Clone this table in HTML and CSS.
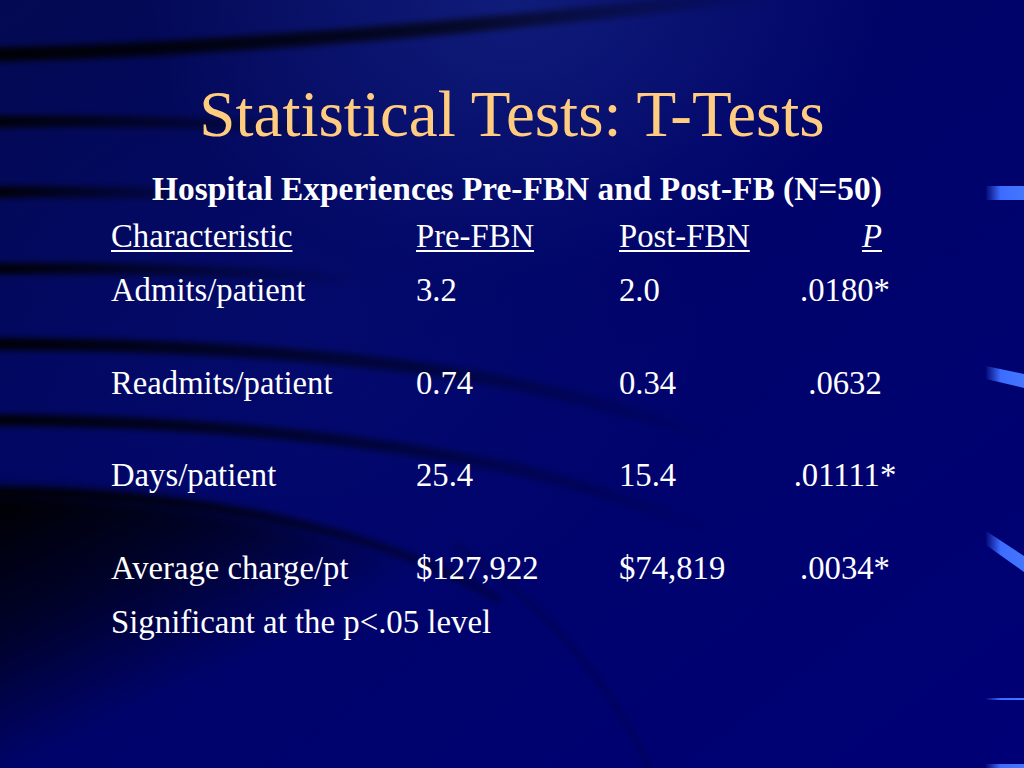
FILE: index.html
```html
<!DOCTYPE html>
<html lang="en">
<head>
<meta charset="utf-8">
<title>Statistical Tests: T-Tests</title>
<link rel="stylesheet" href="styles.css">
</head>
<body>
<div class="slide">
  <svg class="bg" viewBox="0 0 1024 768" preserveAspectRatio="none" aria-hidden="true">
    <defs>
      <linearGradient id="base" x1="0" y1="0" x2="1" y2="1">
        <stop offset="0" stop-color="#040a52"/>
        <stop offset="0.45" stop-color="#000468"/>
        <stop offset="1" stop-color="#000076"/>
      </linearGradient>
      <radialGradient id="glow" cx="0.5" cy="0.0" r="0.36">
        <stop offset="0" stop-color="#18288a" stop-opacity="0.65"/>
        <stop offset="1" stop-color="#18288a" stop-opacity="0"/>
      </radialGradient>
      <radialGradient id="glow2" cx="0.3" cy="0.45" r="0.4">
        <stop offset="0" stop-color="#0c1a80" stop-opacity="0.25"/>
        <stop offset="1" stop-color="#0c1a80" stop-opacity="0"/>
      </radialGradient>
      <linearGradient id="fadeL" gradientUnits="userSpaceOnUse" x1="0" y1="0" x2="780" y2="0">
        <stop offset="0" stop-color="#000" stop-opacity="0.95"/>
        <stop offset="0.6" stop-color="#000" stop-opacity="0.65"/>
        <stop offset="1" stop-color="#000" stop-opacity="0"/>
      </linearGradient>
      <linearGradient id="fadeXS" gradientUnits="userSpaceOnUse" x1="0" y1="0" x2="230" y2="0">
        <stop offset="0" stop-color="#000" stop-opacity="0.95"/>
        <stop offset="1" stop-color="#000" stop-opacity="0"/>
      </linearGradient>
      <linearGradient id="fadeS" gradientUnits="userSpaceOnUse" x1="0" y1="0" x2="360" y2="0">
        <stop offset="0" stop-color="#000" stop-opacity="0.95"/>
        <stop offset="1" stop-color="#000" stop-opacity="0"/>
      </linearGradient>
      <linearGradient id="fadeM" gradientUnits="userSpaceOnUse" x1="0" y1="0" x2="720" y2="0">
        <stop offset="0" stop-color="#000" stop-opacity="0.95"/>
        <stop offset="0.5" stop-color="#000" stop-opacity="0.5"/>
        <stop offset="1" stop-color="#000" stop-opacity="0"/>
      </linearGradient>
      <linearGradient id="dark" gradientUnits="userSpaceOnUse" x1="0" y1="490" x2="110" y2="720">
        <stop offset="0" stop-color="#000" stop-opacity="1"/>
        <stop offset="0.5" stop-color="#000" stop-opacity="0.6"/>
        <stop offset="1" stop-color="#000" stop-opacity="0"/>
      </linearGradient>
      <linearGradient id="accent" gradientUnits="userSpaceOnUse" x1="985" y1="0" x2="1024" y2="0">
        <stop offset="0" stop-color="#3c6cff" stop-opacity="0"/>
        <stop offset="0.4" stop-color="#3c6cff" stop-opacity="1"/>
        <stop offset="1" stop-color="#4576ff"/>
      </linearGradient>
      <filter id="blur" x="-10%" y="-50%" width="120%" height="200%">
        <feGaussianBlur stdDeviation="3"/>
      </filter>
      <filter id="blurBig" x="-20%" y="-20%" width="140%" height="140%">
        <feGaussianBlur stdDeviation="8"/>
      </filter>
    </defs>
    <rect width="1024" height="768" fill="url(#base)"/>
    <rect width="1024" height="768" fill="url(#glow)"/>
    <rect width="1024" height="768" fill="url(#glow2)"/>
    <path d="M-20 490 C 200 488 420 540 530 640 C 580 690 615 730 640 780 L -20 780 Z" fill="url(#dark)" filter="url(#blurBig)"/>
    <g fill="none" filter="url(#blur)">
      <path d="M-20 55 C 200 50 450 32 780 -8" stroke="url(#fadeL)" stroke-width="14"/>
      <path d="M-20 122 C 100 120 200 122 300 128" stroke="url(#fadeS)" stroke-width="11"/>
      <path d="M-20 192 C 60 191 140 192 230 195" stroke="url(#fadeXS)" stroke-width="11"/>
      <path d="M-20 269 C 120 267 260 271 380 282" stroke="url(#fadeS)" stroke-width="11"/>
      <path d="M-20 344 C 200 344 380 356 520 385 C 600 402 660 420 720 440" stroke="url(#fadeM)" stroke-width="12"/>
      <path d="M-20 420 C 200 420 380 440 520 470 C 600 490 660 510 720 535" stroke="url(#fadeM)" stroke-width="11"/>
      <path d="M-20 492 C 200 490 380 530 500 600" stroke="url(#fadeM)" stroke-width="8"/>
      <path d="M455 545 C 540 600 610 680 650 770" stroke="#000" stroke-opacity="0.18" stroke-width="6"/>
    </g>
    <rect x="986" y="186" width="38" height="14" fill="url(#accent)"/>
    <polygon points="986,366 1024,374 1024,388 986,379" fill="url(#accent)"/>
    <polygon points="986,531 1024,556 1024,572 986,545" fill="url(#accent)"/>
    <rect x="986" y="698" width="38" height="2" fill="url(#accent)"/>
    <rect x="986" y="764" width="38" height="4" fill="url(#accent)"/>
  </svg>

  <div class="content">
    <h1 class="title">Statistical Tests: T-Tests</h1>
    <h2 class="subtitle">Hospital Experiences Pre-FBN and Post-FB (N=50)</h2>
    <div class="table">
      <div class="row head">
        <span class="u">Characteristic</span>
        <span class="u">Pre-FBN</span>
        <span class="u">Post-FBN</span>
        <span class="pcol phead"><i class="u">P</i></span>
      </div>
      <div class="rows">
        <div class="row">
          <span>Admits/patient</span><span>3.2</span><span>2.0</span><span class="pcol">.0180*</span>
        </div>
        <div class="row">
          <span>Readmits/patient</span><span>0.74</span><span>0.34</span><span class="pcol">.0632</span>
        </div>
        <div class="row">
          <span>Days/patient</span><span>25.4</span><span>15.4</span><span class="pcol">.01111*</span>
        </div>
        <div class="row">
          <span>Average charge/pt</span><span>$127,922</span><span>$74,819</span><span class="pcol">.0034*</span>
        </div>
      </div>
      <p class="note">Significant at the p&lt;.05 level</p>
    </div>
  </div>
</div>
</body>
</html>
```

FILE: styles.css
```css
html, body {
  margin: 0;
  padding: 0;
  background: #00006e;
}

.slide {
  position: relative;
  width: 1024px;
  height: 768px;
  overflow: hidden;
  font-family: "Liberation Serif", "Times New Roman", serif;
  color: #ffffff;
}

.bg {
  position: absolute;
  left: 0;
  top: 0;
  width: 1024px;
  height: 768px;
  display: block;
}

.content {
  position: relative;
  display: flex;
  flex-direction: column;
  padding-top: 82px;
}

.title {
  margin: 0;
  font-size: 65px;
  line-height: 64px;
  height: 64px;
  font-weight: normal;
  text-align: center;
  color: #ffcc80;
}

.subtitle {
  margin: 23px 0 0 0;
  padding-left: 10px;
  font-size: 33.4px;
  line-height: 40px;
  height: 40px;
  font-weight: bold;
  text-align: center;
}

.table {
  display: flex;
  flex-direction: column;
  padding-left: 111px;
  margin-top: 7px;
}

.rows {
  display: flex;
  flex-direction: column;
  gap: 52.5px;
  margin-top: 14px;
}

.row {
  display: grid;
  grid-template-columns: 305px 203px 171px 110px;
  height: 40px;
  line-height: 40px;
  font-size: 32.7px;
  white-space: nowrap;
}

.pcol {
  text-align: center;
}

.phead {
  text-align: right;
  padding-right: 18px;
}

.u {
  text-decoration: underline;
  text-decoration-thickness: 2px;
  text-underline-offset: 3px;
}

.note {
  margin: 14.5px 0 0 0;
  font-size: 32.8px;
  line-height: 40px;
  height: 40px;
  white-space: nowrap;
}
```
